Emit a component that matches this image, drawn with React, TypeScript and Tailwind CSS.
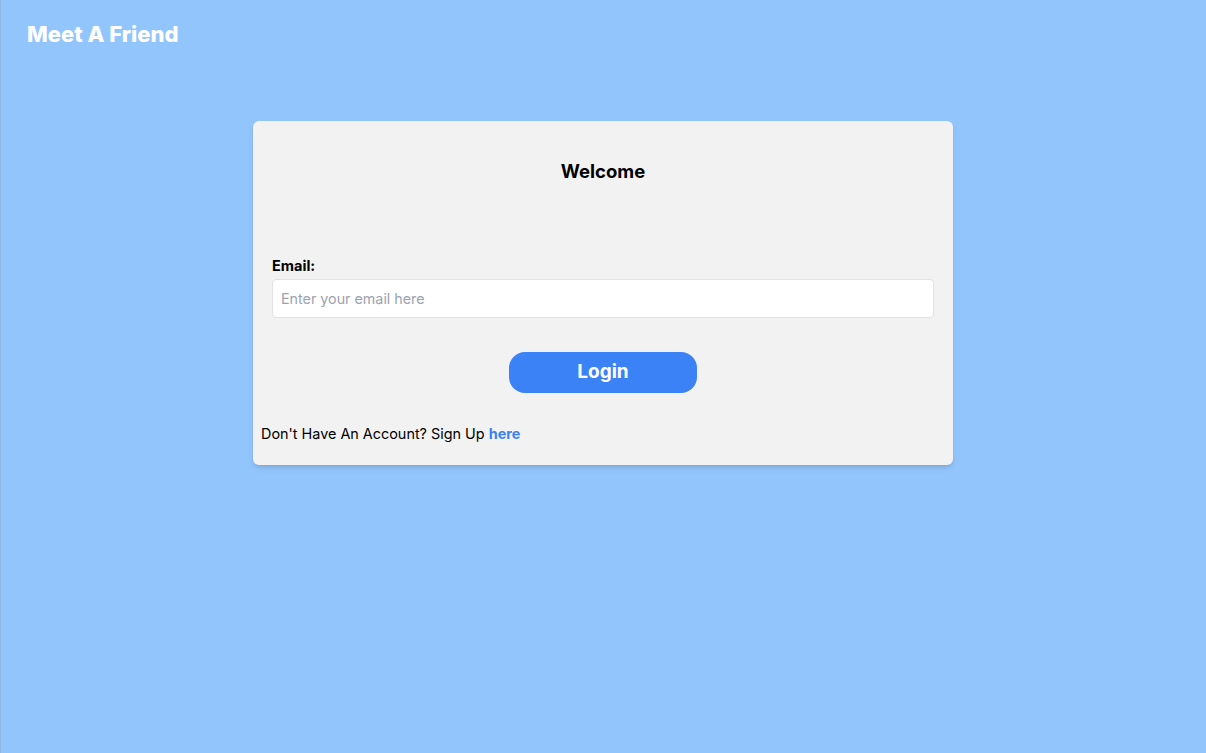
export default function App() {
  return (
    <div
      className="min-h-[753px] w-full bg-[#93c5fd] shadow-[inset_1px_0_0_#8fb8e6]"
      style={{ fontFamily: "Inter, 'Liberation Sans', sans-serif" }}
    >
      <header className="px-[27px] pt-[20px]">
        <h1 className="text-[22px] leading-7 font-extrabold text-white">Meet A Friend</h1>
      </header>

      <div className="mx-auto mt-[73px] w-[700px] rounded-md bg-[#f2f2f2] pt-[36px] pb-[21px] shadow-md">
        <h2 className="text-center text-[18.5px] leading-7 font-bold text-black">Welcome</h2>

        <div className="mt-[71px] px-[19px]">
          <label className="block text-[14.5px] leading-5 font-bold text-black">Email:</label>
          <input
            type="email"
            placeholder="Enter your email here"
            className="mt-[3px] h-[39px] w-full rounded border border-[#e2e2e2] bg-white px-2 text-[14.3px] text-black placeholder:text-[#9ca3af] outline-none"
          />
        </div>

        <div className="mt-[34px] flex justify-center">
          <button className="h-[41px] w-[188px] rounded-2xl bg-[#3b82f6] text-[19px] font-bold text-white">
            Login
          </button>
        </div>

        <p className="mt-[31px] px-2 text-[14.4px] leading-5 text-black">
          Don't Have An Account? Sign Up{" "}
          <a href="#" className="font-bold text-[#3b82f6]">
            here
          </a>
        </p>
      </div>
    </div>
  );
}
